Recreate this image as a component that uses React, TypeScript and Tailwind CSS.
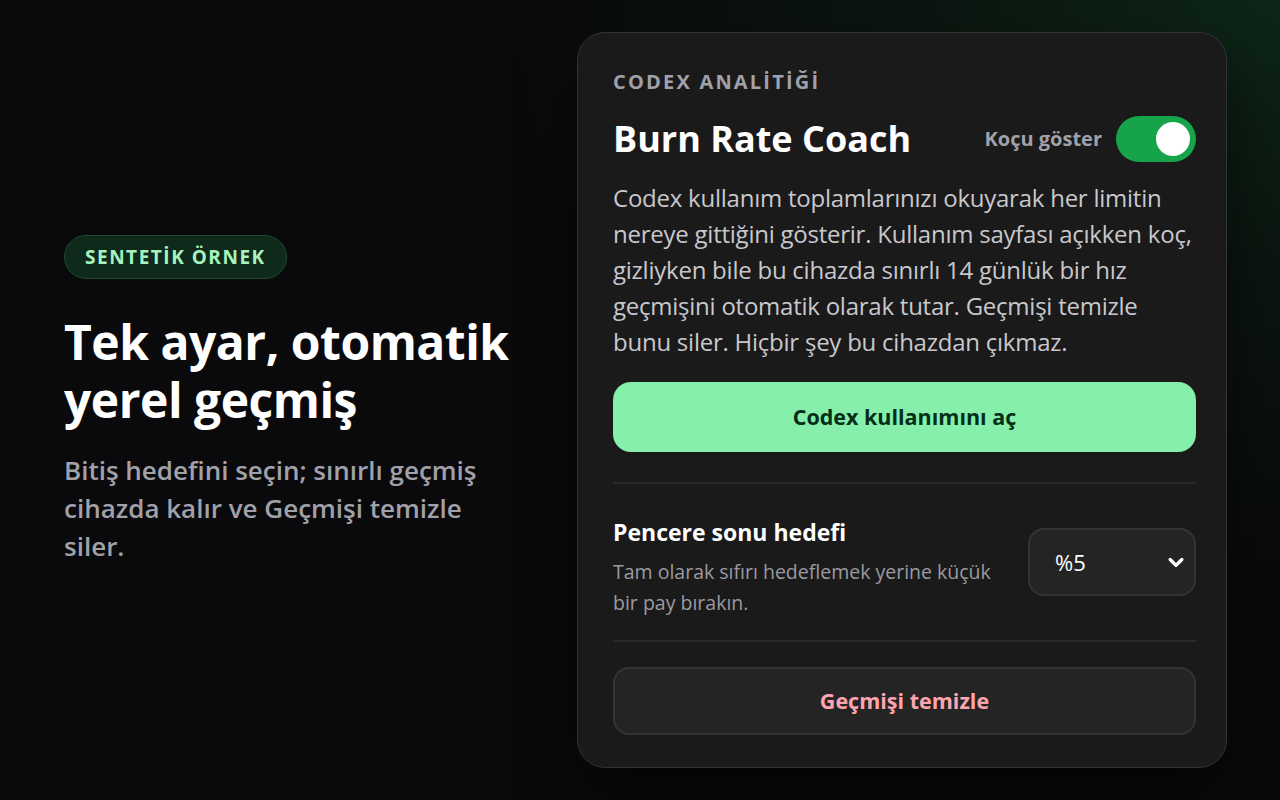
import React, { useState } from "react";

export default function App() {
  const [on, setOn] = useState(true);

  return (
    <div
      className="w-[1280px] h-[800px] overflow-hidden flex items-center pl-16 pr-[53px] text-white bg-[radial-gradient(ellipse_760px_560px_at_100%_0%,#0d2617_0%,#0b1610_45%,#0a0a0c_100%)]"
      style={{ fontFamily: '"Open Sans", "Noto Sans", sans-serif' }}
    >
      <div className="flex-1 flex flex-col items-start pr-10">
        <span className="h-11 px-5 flex items-center rounded-full bg-[#0f2a1b] border border-[#1d4a2e] text-[#a7f3c0] text-[19px] font-bold tracking-[0.08em]">
          SENTETİK ÖRNEK
        </span>
        <h1 className="mt-[34px] text-[48px] leading-[58px] font-bold tracking-[-0.01em]">
          Tek ayar, otomatik
          <br />
          yerel geçmiş
        </h1>
        <p className="mt-[22px] text-[26px] leading-[38px] font-semibold text-[#a1a1aa] max-w-[440px]">
          Bitiş hedefini seçin; sınırlı geçmiş cihazda kalır ve Geçmişi temizle siler.
        </p>
      </div>

      <div className="w-[650px] shrink-0 rounded-[28px] border border-[#333336] bg-[#1a1a1b] pl-[35px] pr-[30px] pt-[37px] pb-[32px] shadow-[0_30px_60px_rgba(0,0,0,0.55)]">
        <div className="text-[20px] font-bold tracking-[0.11em] text-[#a1a1aa] leading-6">
          CODEX ANALİTİĞİ
        </div>
        <div className="mt-[22px] h-[46px] flex items-center justify-between">
          <h2 className="text-[36px] font-bold leading-[44px]">Burn Rate Coach</h2>
          <div className="flex items-center gap-[14px]">
            <span className="text-[20px] font-bold text-[#a1a1aa]">Koçu göster</span>
            <button
              onClick={() => setOn(!on)}
              className={`w-20 h-[46px] rounded-full px-[6px] flex items-center ${on ? "bg-[#16a34a] justify-end" : "bg-[#3f3f46] justify-start"}`}
            >
              <span className="w-[34px] h-[34px] rounded-full bg-white block" />
            </button>
          </div>
        </div>
        <p className="mt-[18px] text-[24px] leading-[36px] tracking-[-0.01em] text-[#c8c8cc]">
          Codex kullanım toplamlarınızı okuyarak her limitin nereye gittiğini gösterir. Kullanım sayfası açıkken koç, gizliyken bile bu cihazda sınırlı 14 günlük bir hız geçmişini otomatik olarak tutar. Geçmişi temizle bunu siler. Hiçbir şey bu cihazdan çıkmaz.
        </p>
        <button className="mt-[22px] w-full h-[70px] rounded-[18px] bg-[#86efac] text-[#052e16] text-[21.5px] font-bold">
          Codex kullanımını aç
        </button>

        <div className="mt-[30px] border-t-2 border-[#2a2a2c]" />

        <div className="mt-[32px] flex items-start justify-between gap-7">
          <div className="flex-1">
            <div className="text-[23px] font-bold leading-[32px]">Pencere sonu hedefi</div>
            <p className="mt-[8px] text-[19.5px] leading-[31px] text-[#9a9aa0]">
              Tam olarak sıfırı hedeflemek yerine küçük bir pay bırakın.
            </p>
          </div>
          <div className="mt-[12px] w-[168px] h-[68px] shrink-0 rounded-[16px] border-2 border-[#343436] bg-[#242425] flex items-center justify-between pl-[25px] pr-[8px]">
            <span className="text-[22px]">%5</span>
            <svg width="20" height="20" viewBox="0 0 24 24" fill="none" stroke="white" strokeWidth="4" strokeLinecap="round" strokeLinejoin="round">
              <path d="M5 9l7 7 7-7" />
            </svg>
          </div>
        </div>

        <div className="mt-[22px] border-t-2 border-[#2a2a2c]" />

        <button className="mt-[25px] w-full h-[68px] rounded-[16px] border-2 border-[#343436] bg-[#242425] text-[#fda4af] text-[21.5px] font-bold">
          Geçmişi temizle
        </button>
      </div>
    </div>
  );
}
